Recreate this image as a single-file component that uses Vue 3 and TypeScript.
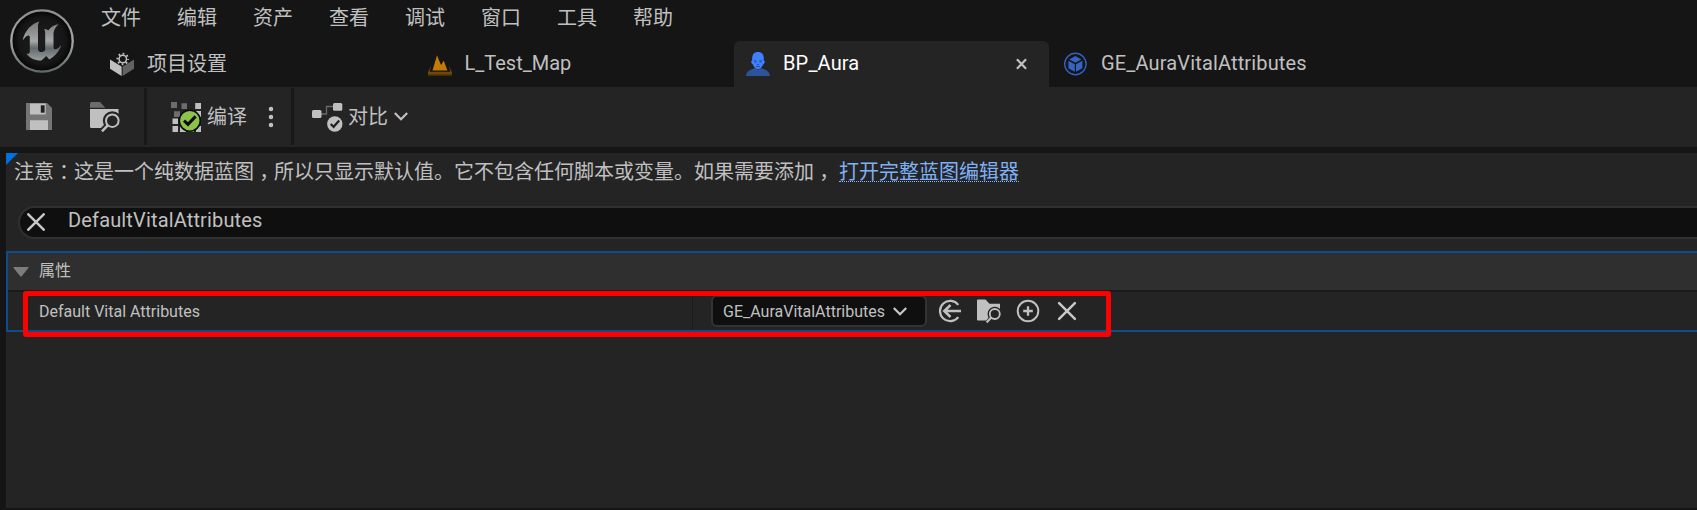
<script setup lang="ts">
interface Tab {
  id: string
  label: string
  active?: boolean
}

const menus: string[] = ['文件', '编辑', '资产', '查看', '调试', '窗口', '工具', '帮助']

const tabs: Tab[] = [
  { id: 'settings', label: '项目设置' },
  { id: 'map', label: 'L_Test_Map' },
  { id: 'aura', label: 'BP_Aura', active: true },
  { id: 'effect', label: 'GE_AuraVitalAttributes' },
]
</script>

<template>
  <div class="editor">
    <header class="header">
      <svg class="logo" viewBox="0 0 64 64">
        <defs>
          <linearGradient id="ring" x1="0" y1="0" x2="0" y2="1">
            <stop offset="0" stop-color="#8e8e8e" />
            <stop offset="0.5" stop-color="#a6a8a8" />
            <stop offset="1" stop-color="#626969" />
          </linearGradient>
          <linearGradient id="metal" x1="0" y1="0" x2="0" y2="1">
            <stop offset="0" stop-color="#777" />
            <stop offset="0.5" stop-color="#a5a7a8" />
            <stop offset="0.68" stop-color="#626a6b" />
            <stop offset="1" stop-color="#9a9fa0" />
          </linearGradient>
          <radialGradient id="disc">
            <stop offset="0" stop-color="#1c1c1c" />
            <stop offset="0.75" stop-color="#161616" />
            <stop offset="1" stop-color="#050505" />
          </radialGradient>
        </defs>
        <circle cx="32" cy="32" r="30.7" fill="url(#disc)" stroke="url(#ring)" stroke-width="2.3" />
        <path
          fill="url(#metal)"
          d="M29.5 12.6C21 15 15 21.5 12.6 31.5C15.3 27.8 18 25.8 19.2 26.8C20 27.5 19.8 29 19.8 31V42.5C19.8 44.8 18 45.2 16.3 44.6C19.5 49.2 25 51.8 31.4 51.6L36.3 46.9L39.3 50.4C44.5 47.6 49.5 42.5 51.3 36C48.5 39.3 46.3 40.6 44.8 40.3C43.7 40 43.5 39 43.5 37.5V24.5C43.5 21.5 45.5 17.8 48.6 15.2C44.5 15.6 40.4 18.2 38.2 21.6C37.4 20.7 36.2 20.2 33.8 20.3C35 21.4 35.2 22.5 35.2 24V41C33.8 42.5 32.3 43.2 31 43C28.8 42.7 28 41.8 28 39.5V18.5C28 16 28.2 14.2 29.5 12.6Z"
        />
      </svg>
      <div class="header-rows">
        <nav class="menu">
          <span v-for="m in menus" :key="m" class="menu-item">{{ m }}</span>
        </nav>
        <div class="tabs">
          <div v-for="t in tabs" :key="t.id" :class="['tab', 'tab-' + t.id, { active: t.active }]">
            <svg v-if="t.id === 'settings'" class="tab-icon" viewBox="0 0 24 24">
              <path fill="#bfbfbf" d="M0 7.6L11.6 14.6V24L0 16.8Z" />
              <path fill="#626262" d="M24 7.6L12.6 14.6V24L24 16.8Z" />
              <circle cx="12.8" cy="7" r="6.5" fill="#151515" />
              <circle cx="12.8" cy="7" r="3.7" fill="none" stroke="#c0c0c0" stroke-width="1.5" />
              <circle cx="12.8" cy="7" r="5.3" fill="none" stroke="#c0c0c0" stroke-width="2" stroke-dasharray="1.7 2.463" stroke-dashoffset=".85" />
            </svg>
            <svg v-else-if="t.id === 'map'" class="tab-icon" viewBox="0 0 24 24">
              <path fill="#c27b08" d="M4.5 18.6L9 3.3L13 13L15.8 8.8L19.4 18.6Z" />
              <path fill="#70480a" d="M3.2 13.5L1.6 19.7H22.4L20.8 13.5L23.9 20.2V23.5H0V20.2Z" />
              <path stroke="#3d290d" d="M0 23H24" />
            </svg>
            <svg v-else-if="t.id === 'aura'" class="tab-icon" viewBox="0 0 24 24">
              <path fill="#2f539b" d="M0 24C.4 20 3 18.2 6.5 17L9.3 16L12 18L14.7 16L17.5 17C21 18.2 23.6 20 24 24Z" />
              <path fill="#4080ff" d="M12 0C16.3 0 18.1 2.8 17.8 8.4C19.6 8.7 18.7 12.1 17.2 12.3C16.4 14.8 14 17.3 12 17.3S7.6 14.8 6.8 12.3C5.3 12.1 4.4 8.7 6.2 8.4C5.9 2.8 7.7 0 12 0Z" />
              <path fill="none" stroke="#244c9c" stroke-width=".9" d="M8.1 8.5L10.8 9.1M15.9 8.5L13.2 9.1M8.4 10.1H10.4M13.6 10.1H15.6M10.9 12.6H13.1M10 14.6H14" />
            </svg>
            <svg v-else class="tab-icon" viewBox="0 0 24 24">
              <circle cx="11.4" cy="12" r="10.7" fill="none" stroke="#3260bd" stroke-width="1.4" />
              <path fill="#3564c4" d="M11.4 3.9L17.5 7.4L11.4 10.8L5.3 7.4ZM4.4 8.8L10.8 12.3V19.8L4.4 16.2ZM18.4 8.8L12 12.3V19.8L18.4 16.2Z" />
            </svg>
            <span class="tab-label">{{ t.label }}</span>
            <svg v-if="t.active" class="tab-close" viewBox="0 0 12 12">
              <path fill="none" stroke="#c0c0c0" stroke-width="2.4" d="M1 .8L11 11.2M11 .8L1 11.2" />
            </svg>
          </div>
        </div>
      </div>
    </header>

    <div class="toolbar">
      <div class="group group-file">
        <svg class="save" viewBox="0 0 26 27">
          <path fill="#757575" d="M0 0H21L26 5V27H0Z" />
          <path fill="#c0c0c0" d="M4 .5H19.7V11.5H4ZM4 17.3H22V27H4Z" />
          <path fill="#202020" d="M14.8 2.3H18.6V9.7H14.8Z" />
        </svg>
        <svg class="browse" viewBox="0 0 30 30">
          <path fill="#6c6c6c" d="M0 5.8V1.5Q0 0 1.5 0H10L15.3 5.8Z" />
          <path fill="#c0c0c0" d="M0 7H28.5V26H1.5Q0 26 0 24.5Z" />
          <circle cx="22.3" cy="18.7" r="9.5" fill="#242424" />
          <path stroke="#242424" stroke-width="6" d="M19 22L11 30" />
          <circle cx="22.3" cy="18.7" r="6.3" fill="none" stroke="#c0c0c0" stroke-width="2" />
          <path stroke="#c0c0c0" stroke-width="2.6" d="M18 23.2L12 29.3" />
        </svg>
      </div>
      <div class="group group-compile">
        <svg class="compile" viewBox="0 0 30 30">
          <path fill="#6d6d6d" d="M0 0H6V6H0ZM10.5 1.2H16V7H10.5ZM3 9.3H9V15H3Z" />
          <path fill="#c0c0c0" d="M24.2 1H30V7H24.2ZM1.5 16.5H7V22H1.5ZM1.5 24H7V30H1.5ZM9 24H15V30H9ZM24.2 9H30V15H24.2ZM17 24H23V30H17ZM25 24H30V30H25Z" />
          <circle cx="18.8" cy="18.7" r="10.5" fill="#8bc24a" stroke="#0c0c0c" stroke-width="1.6" />
          <path fill="none" stroke="#0c0c0c" stroke-width="3" d="M13 18.6L17 22.4L24.6 14.4" />
        </svg>
        <span class="compile-label">编译</span>
        <svg class="dots" viewBox="0 0 6 22">
          <path fill="none" stroke="#c0c0c0" stroke-width="4.5" stroke-linecap="round" d="M3 3V3.01M3 11V11.01M3 19V19.01" />
        </svg>
      </div>
      <div class="group group-diff">
        <svg class="diff" viewBox="0 0 31 30">
          <path fill="none" stroke="#696969" stroke-width="1.3" d="M8 12H14.5V4.5H22" />
          <rect y="8" width="9.5" height="8" rx="1.5" fill="#c0c0c0" />
          <rect x="21" y="1" width="9.3" height="7.7" rx="1.5" fill="#c0c0c0" />
          <circle cx="22.8" cy="22" r="7.7" fill="#c0c0c0" />
          <path fill="none" stroke="#202020" stroke-width="2.2" d="M18.7 22L21.6 24.8L27.2 18.5" />
        </svg>
        <span class="diff-label">对比</span>
        <svg class="chevron" viewBox="0 0 14 9">
          <path fill="none" stroke="#c0c0c0" stroke-width="2.2" d="M.8 1L7 7.3L13.2 1" />
        </svg>
      </div>
    </div>

    <main class="panel">
      <div class="corner"></div>
      <p class="notice">
        注意<span class="mid colon">：</span>这是一个纯数据蓝图<span class="mid comma">，</span>所以只显示默认值。它不包含任何脚本或变量。如果需要添加<span class="mid comma">，</span><a class="link">打开完整蓝图编辑器</a>
      </p>

      <div class="search">
        <svg class="clear" viewBox="0 0 18 18">
          <path fill="none" stroke="#c8c8c8" stroke-width="2.5" stroke-linecap="round" d="M1.3 1.3L16.7 16.7M16.7 1.3L1.3 16.7" />
        </svg>
        <span class="query">DefaultVitalAttributes</span>
      </div>

      <section class="category">
        <div class="category-head">
          <svg class="expander" viewBox="0 0 16 10"><path fill="#7d7d7d" d="M.8 0H15.2Q16 .2 15.4 1L8.7 9.3Q8 10 7.3 9.3L.6 1Q0 .2 .8 0Z" /></svg>
          <span class="category-title">属性</span>
        </div>
        <div class="row">
          <div class="row-name">Default Vital Attributes</div>
          <div class="row-value">
            <div class="combo">
              <span class="combo-text">GE_AuraVitalAttributes</span>
              <svg class="chevron" viewBox="0 0 14 9">
                <path fill="none" stroke="#c8c8c8" stroke-width="2.2" d="M.8 1L7 7.3L13.2 1" />
              </svg>
            </div>
            <svg class="act use" viewBox="0 0 24 24">
              <path fill="none" stroke="#c0c0c0" stroke-width="2.2" d="M20.3 5.8A10.2 10.2 0 1 0 20.3 18.2" />
              <path fill="none" stroke="#c0c0c0" stroke-width="2.6" d="M23 12H6.5M12.5 6L6.3 12L12.5 18" />
            </svg>
            <svg class="act find" viewBox="0 0 24 24">
              <path fill="#c0c0c0" d="M0 1.5Q0 .5 1 .5H8.5L12.5 4.7H23V21.5H1Q0 21.5 0 20.5Z" />
              <path fill="#242424" d="M17.8 7.8A7.2 7.2 0 0 1 24 11.4V24H7.5L11.5 18.5A7.2 7.2 0 0 1 17.8 7.8Z" />
              <circle cx="17.8" cy="15" r="5" fill="none" stroke="#c0c0c0" stroke-width="1.8" />
              <path stroke="#c0c0c0" stroke-width="2.2" d="M14.3 18.5L9.6 23.4" />
            </svg>
            <svg class="act add" viewBox="0 0 24 24">
              <circle cx="12" cy="12" r="10.3" fill="none" stroke="#c0c0c0" stroke-width="2" />
              <path stroke="#c0c0c0" stroke-width="2.3" d="M12 7.2V16.8M7.2 12H16.8" />
            </svg>
            <svg class="act reset" viewBox="0 0 24 24">
              <path stroke="#c8c8c8" stroke-width="2.5" stroke-linecap="round" d="M4.1 4.1L19.9 19.9M19.9 4.1L4.1 19.9" />
            </svg>
          </div>
        </div>
        <div class="highlight"></div>
      </section>
    </main>
  </div>
</template>

<style>
body {
  margin: 0;
  background: #151515;
}
</style>

<style scoped>
.editor {
  display: flex;
  flex-direction: column;
  box-sizing: border-box;
  width: 100%;
  height: 510px;
  overflow: hidden;
  background: #151515;
  color: #c0c0c0;
  font-family: Roboto, 'Noto Sans CJK SC', sans-serif;
  font-size: 20px;
  line-height: 24px;
}
svg {
  display: block;
  flex: none;
}
.header {
  display: flex;
  height: 87px;
  flex: none;
}
.logo {
  width: 64px;
  height: 64px;
  margin: 9.4px 0 0 9.5px;
}
.header-rows {
  display: flex;
  flex-direction: column;
  justify-content: space-between;
}
.menu {
  display: flex;
  gap: 36px;
  padding: 6px 0 0 27.5px;
}
.menu-item {
  width: 40px;
  white-space: nowrap;
}
.tabs {
  display: flex;
  height: 46px;
}
.tab {
  display: flex;
  box-sizing: border-box;
  align-items: center;
  width: 315px;
  padding: 0 22px 0 12px;
  border-radius: 6px 6px 0 0;
}
.tab-settings {
  width: 342px;
  padding-left: 36.5px;
}
.tab-map {
  width: 318.5px;
}
.tab-effect {
  padding-left: 15px;
}
.tab.active {
  background: #242424;
  color: #fff;
}
.tab-icon {
  width: 24px;
  height: 24px;
}
.tab-label {
  margin-left: 13px;
  padding-bottom: 2px;
  letter-spacing: 0.15px;
  white-space: nowrap;
}
.tab-settings .tab-label {
  padding-bottom: 1px;
  letter-spacing: 0;
}
.tab-map .tab-label {
  letter-spacing: 0;
}
.tab-close {
  width: 11px;
  height: 12px;
  margin-left: auto;
}
.toolbar {
  display: flex;
  height: 60px;
  flex: none;
  background: #242424;
}
.group {
  display: flex;
  box-sizing: border-box;
  align-items: center;
  height: 57px;
  margin-top: 1px;
  border-right: 3px solid #181818;
}
.group-file {
  width: 147px;
  padding-left: 26px;
}
.save {
  width: 26px;
  height: 27px;
}
.browse {
  width: 30px;
  height: 30px;
  margin-left: 38px;
}
.group-compile {
  width: 147px;
  padding-left: 24px;
}
.compile {
  width: 30px;
  height: 30px;
}
.compile-label {
  margin-left: 6px;
}
.dots {
  width: 6px;
  height: 22px;
  margin-left: 21.3px;
}
.group-diff {
  border: 0;
  padding-left: 18px;
}
.diff {
  width: 31px;
  height: 30px;
}
.diff-label {
  margin-left: 5px;
}
.chevron {
  width: 14px;
  height: 9px;
}
.group-diff .chevron {
  margin-left: 6px;
}
.panel {
  position: relative;
  box-sizing: border-box;
  height: 355px;
  margin: 6px 0 0 6px;
  padding-top: 7px;
  background: #242424;
}
.corner {
  position: absolute;
  top: 0;
  left: 0;
  border-top: 12px solid #0070e0;
  border-right: 12px solid transparent;
}
.notice {
  height: 24px;
  margin: 0 0 0 8px;
  white-space: nowrap;
}
.mid {
  font-family: 'Noto Sans CJK TC', sans-serif;
  line-height: 0;
}
.colon {
  vertical-align: -1px;
}
.comma {
  vertical-align: -6px;
}
.link {
  display: inline-block;
  height: 21px;
  margin-left: 5px;
  border-bottom: 1px dotted #8ab8f5;
  color: #7fb0f5;
}
.search {
  display: flex;
  box-sizing: border-box;
  height: 33px;
  margin: 22px -20px 0 12px;
  padding-left: 7px;
  border: 2px solid #303030;
  border-radius: 17px;
  background: #0f0f0f;
}
.clear {
  width: 18px;
  height: 18px;
  margin-top: 5px;
}
.query {
  margin-left: 23px;
  letter-spacing: 0.15px;
}
.category {
  position: relative;
  box-sizing: border-box;
  height: 81px;
  margin: 12px -4px 0 0;
  border: 2px solid #104b8c;
  font-size: 16px;
}
.category-head {
  display: flex;
  box-sizing: border-box;
  align-items: center;
  height: 39px;
  padding-left: 5px;
  border-bottom: 2px solid #1a1a1a;
  background: #2f2f2f;
}
.category-title {
  padding-bottom: 1px;
}
.expander {
  width: 16px;
  height: 10px;
  margin-right: 10px;
}
.row {
  display: flex;
  height: 38px;
}
.row-name {
  box-sizing: border-box;
  width: 685px;
  padding: 8px 0 0 31px;
  border-right: 1px solid #1a1a1a;
}
.row-value {
  display: flex;
  align-items: center;
  padding-left: 18px;
}
.combo {
  display: flex;
  box-sizing: border-box;
  align-items: center;
  justify-content: space-between;
  width: 216px;
  height: 32px;
  padding: 0 18px 0 10px;
  border: 2px solid #333;
  border-radius: 6px;
  background: #0f0f0f;
}
.combo-text {
  padding-top: 2px;
}
.act {
  width: 24px;
  height: 24px;
}
.use {
  margin-left: 11px;
}
.find,
.add,
.reset {
  margin-left: 15px;
}
.highlight {
  position: absolute;
  top: 38px;
  left: 15px;
  box-sizing: border-box;
  width: 1088px;
  height: 46px;
  border: 5px solid #f00;
  border-radius: 3px;
}
</style>
